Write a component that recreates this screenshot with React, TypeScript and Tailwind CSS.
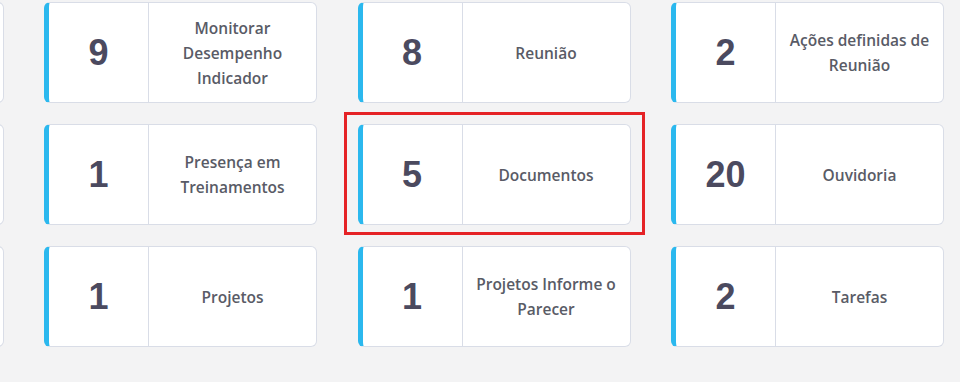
type Stat = { value: number; label: string };

const ROWS: Stat[][] = [
  [
    { value: 0, label: "" },
    { value: 9, label: "Monitorar Desempenho Indicador" },
    { value: 8, label: "Reunião" },
    { value: 2, label: "Ações definidas de Reunião" },
  ],
  [
    { value: 0, label: "" },
    { value: 1, label: "Presença em Treinamentos" },
    { value: 5, label: "Documentos" },
    { value: 20, label: "Ouvidoria" },
  ],
  [
    { value: 0, label: "" },
    { value: 1, label: "Projetos" },
    { value: 1, label: "Projetos Informe o Parecer" },
    { value: 2, label: "Tarefas" },
  ],
];

function StatCard({ stat, highlight }: { stat: Stat; highlight?: boolean }) {
  return (
    <div className="relative">
      {highlight && (
        <div className="pointer-events-none absolute -left-[14px] -right-[14px] -top-[12.5px] -bottom-[10px] border-[3px] border-[#e52226]" />
      )}
      <div className="flex h-[101px] overflow-hidden rounded-[6px] border border-l-[5px] border-[#d9dde7] border-l-[#2bb8ee] bg-white">
        <div className="flex w-[100px] shrink-0 items-center justify-center border-r border-[#d9dde7] font-['Liberation_Sans',Arial,sans-serif] text-[36px] font-bold text-[#4b4a5f]">
          {stat.value || ""}
        </div>
        <div className="flex flex-1 items-center justify-center px-2 pt-px text-center font-['Open_Sans',sans-serif] text-[15.5px] font-semibold leading-[25px] text-[#595b66]">
          {stat.label}
        </div>
      </div>
    </div>
  );
}

export default function App() {
  return (
    <div className="h-[382px] w-[960px] overflow-hidden bg-[#f3f3f4] pt-[2px]">
      <div className="ml-[-269.5px] grid grid-cols-[repeat(4,273px)] gap-x-[40.5px] gap-y-[21px]">
        {ROWS.map((row, r) =>
          row.map((stat, c) => (
            <StatCard key={`${r}-${c}`} stat={stat} highlight={r === 1 && c === 2} />
          )),
        )}
      </div>
    </div>
  );
}
